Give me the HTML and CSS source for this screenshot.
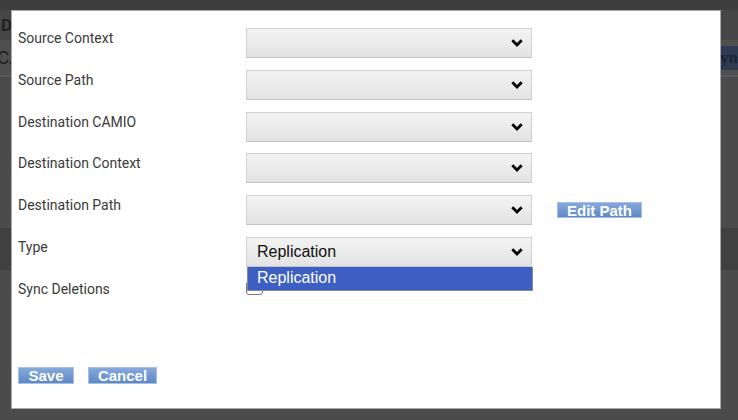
FILE: index.html
```html
<!DOCTYPE html>
<html lang="en">
<head>
  <meta charset="UTF-8">
  <meta name="viewport" content="width=device-width, initial-scale=1.0">
  <title>Replication Job</title>
  <link rel="stylesheet" href="styles.css">
</head>
<body>
  <div class="page">
    <div class="page-top"></div>
    <div class="page-title"><span>Do</span></div>
    <div class="page-toolbar">
      <span class="toolbar-name">CA</span>
      <span class="toolbar-btn">Syn</span>
    </div>
    <div class="page-body"></div>
    <div class="page-band"></div>
    <div class="page-rest"></div>
  </div>

  <div class="dialog">
    <form class="job-form">
      <div class="form-row">
        <label>Source Context</label>
        <div class="select"><span class="select-value"></span><svg class="chevron" width="12" height="8" viewBox="0 0 12 8"><path d="M1.3 1.3 L6 6 L10.7 1.3" fill="none" stroke="#000" stroke-width="2.8"/></svg></div>
      </div>
      <div class="form-row">
        <label>Source Path</label>
        <div class="select"><span class="select-value"></span><svg class="chevron" width="12" height="8" viewBox="0 0 12 8"><path d="M1.3 1.3 L6 6 L10.7 1.3" fill="none" stroke="#000" stroke-width="2.8"/></svg></div>
      </div>
      <div class="form-row">
        <label>Destination CAMIO</label>
        <div class="select"><span class="select-value"></span><svg class="chevron" width="12" height="8" viewBox="0 0 12 8"><path d="M1.3 1.3 L6 6 L10.7 1.3" fill="none" stroke="#000" stroke-width="2.8"/></svg></div>
      </div>
      <div class="form-row">
        <label>Destination Context</label>
        <div class="select"><span class="select-value"></span><svg class="chevron" width="12" height="8" viewBox="0 0 12 8"><path d="M1.3 1.3 L6 6 L10.7 1.3" fill="none" stroke="#000" stroke-width="2.8"/></svg></div>
      </div>
      <div class="form-row">
        <label>Destination Path</label>
        <div class="select"><span class="select-value"></span><svg class="chevron" width="12" height="8" viewBox="0 0 12 8"><path d="M1.3 1.3 L6 6 L10.7 1.3" fill="none" stroke="#000" stroke-width="2.8"/></svg></div>
        <button type="button" class="btn btn-edit">Edit Path</button>
      </div>
      <div class="form-row">
        <label>Type</label>
        <div class="select select-open">
          <span class="select-value">Replication</span><svg class="chevron" width="12" height="8" viewBox="0 0 12 8"><path d="M1.3 1.3 L6 6 L10.7 1.3" fill="none" stroke="#000" stroke-width="2.8"/></svg>
          <ul class="options">
            <li class="option-active">Replication</li>
          </ul>
        </div>
      </div>
      <div class="form-row">
        <label>Sync Deletions</label>
        <span class="checkbox"></span>
      </div>
      <div class="actions">
        <button type="button" class="btn btn-save">Save</button>
        <button type="button" class="btn btn-cancel">Cancel</button>
      </div>
    </form>
  </div>
</body>
</html>
```

FILE: styles.css
```css
* {
  box-sizing: border-box;
}
body {
  margin: 0;
  width: 738px;
  height: 420px;
  overflow: hidden;
  background-color: #4a4a4a;
  font-family: Roboto, "Liberation Sans", sans-serif;
  position: relative;
}

/* dimmed page behind the dialog */
.page-top {
  height: 10px;
  background-color: #3e3e3e;
}
.page-title {
  height: 30px;
  background-color: #464646;
  color: #222;
  font-weight: bold;
  font-size: 17px;
  line-height: 30px;
  padding-left: 1px;
}
.page-toolbar {
  height: 37px;
  background-color: #4f4f4f;
  border-bottom: 2px solid #5a5a5a;
  display: flex;
  align-items: center;
  justify-content: space-between;
}
.toolbar-name {
  color: #1e1e1e;
  font-size: 19px;
  margin-left: -3px;
}
.toolbar-btn {
  background-color: #2d3a52;
  color: #1c2436;
  font-family: "Liberation Serif", serif;
  font-size: 17px;
  font-weight: bold;
  padding: 2px 0 2px 3px;
}
.page-body {
  height: 151px;
  background-color: #4b4b4b;
}
.page-band {
  height: 42px;
  background-color: #404040;
}
.page-rest {
  height: 150px;
  background-color: #4b4b4b;
}

.dialog {
  position: absolute;
  left: 11px;
  top: 10px;
  width: 710px;
  height: 399px;
  background-color: #fff;
  border: 1px solid #a8a8a8;
}

.job-form {
  padding: 17px 0 0 6px;
}

.form-row {
  display: flex;
  align-items: flex-start;
  height: 30px;
  margin-bottom: 11.8px;
}

.form-row label {
  width: 228px;
  font-size: 14px;
  line-height: 20px;
  color: #3a3a3a;
}

.select {
  position: relative;
  width: 286px;
  height: 30px;
  display: flex;
  align-items: center;
  justify-content: space-between;
  padding: 0 8px 0 10px;
  background: linear-gradient(#f3f3f3, #e3e3e3);
  border: 1px solid #d2d2d2;
  border-bottom-color: #c4c4c4;
  font-family: "Liberation Sans", Arial, sans-serif;
  font-size: 16px;
  color: #111;
}

.chevron {
  flex-shrink: 0;
}

.options {
  position: absolute;
  left: 0;
  top: 29px;
  width: 286px;
  margin: 0;
  padding: 0;
  list-style: none;
  border: 1px solid #8a8a8a;
  border-top: none;
  z-index: 2;
}
.option-active {
  background-color: #3d5fc4;
  color: #fff;
  height: 23px;
  line-height: 21px;
  padding-left: 9px;
}

.checkbox {
  display: block;
  width: 17px;
  height: 14px;
  margin-top: 2px;
  border: 1px solid #777;
  border-radius: 3px;
}

.btn {
  height: 17px;
  padding: 0;
  border: 1px solid #a9c0e4;
  background: linear-gradient(#86a9db, #5d89c8);
  color: #fff;
  font-family: "Liberation Sans", Arial, sans-serif;
  font-weight: bold;
  font-size: 15px;
  line-height: 15px;
  cursor: pointer;
}
.btn-edit {
  align-self: center;
  margin-left: 25px;
  width: 85px;
  height: 16px;
}

.actions {
  display: flex;
  gap: 14px;
  margin-top: 58px;
}
.btn-save {
  width: 56px;
}
.btn-cancel {
  width: 69px;
}
```
